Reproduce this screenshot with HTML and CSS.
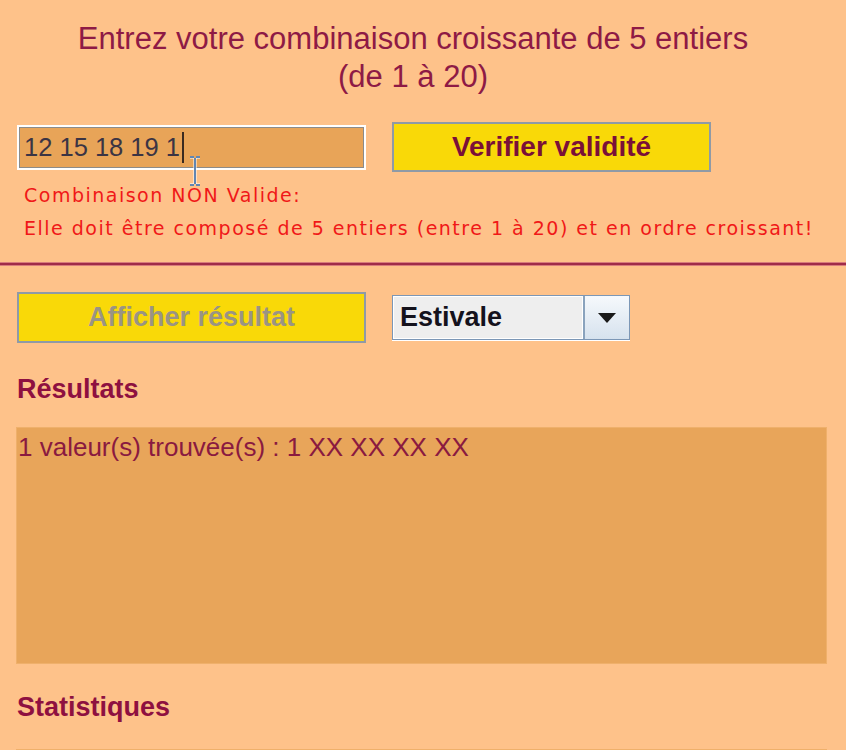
FILE: index.html
```html
<!DOCTYPE html>
<html lang="fr">
<head>
<meta charset="utf-8">
<title>Combinaison</title>
<link rel="stylesheet" href="styles.css">
</head>
<body>
<div class="page">
  <h1 class="title">Entrez votre combinaison croissante de 5 entiers<br>(de 1 à 20)</h1>

  <div class="row row-check">
    <div class="field-wrap">
      <div class="field"><span class="field-text">12 15 18 19 1</span><span class="caret"></span></div>
      <svg class="ibeam" width="12" height="30" viewBox="0 0 12 30">
        <path d="M1 1 H5 M7 1 H11 M6 2 V28 M1 29 H5 M7 29 H11" stroke="#ffffff" stroke-width="3" fill="none"/>
        <path d="M1 1 H5 M7 1 H11 M6 2 V28 M1 29 H5 M7 29 H11" stroke="#2f5f99" stroke-width="1.5" fill="none"/>
      </svg>
    </div>
    <button class="btn btn-check">Verifier validité</button>
  </div>

  <div class="error">
    <div>Combinaison NON Valide:</div>
    <div>Elle doit être composé de 5 entiers (entre 1 à 20) et en ordre croissant!</div>
  </div>
</div>

<div class="divider"></div>

<div class="page">
  <div class="row row-show">
    <button class="btn btn-show" disabled>Afficher résultat</button>
    <div class="combo">
      <span class="combo-value">Estivale</span>
      <span class="combo-arrow">
        <svg width="20" height="12" viewBox="0 0 20 12"><path d="M1 1 H19 L10 11 Z" fill="#1a1a1a"/></svg>
      </span>
    </div>
  </div>

  <h2 class="section-title">Résultats</h2>
  <div class="panel panel-results">1 valeur(s) trouvée(s) : 1 XX XX XX XX</div>

  <h2 class="section-title section-stats">Statistiques</h2>
  <div class="panel panel-stats"></div>
</div>
</body>
</html>
```

FILE: styles.css
```css
html, body {
  margin: 0;
  padding: 0;
  background: #fec28a;
  height: 100%;
  overflow: hidden;
}

body {
  font-family: "Liberation Sans", Arial, sans-serif;
}

.page {
  width: 809px;
  padding-left: 17px;
}

.title {
  margin: 0;
  padding-top: 20px;
  width: 792px;
  text-align: center;
  font-weight: normal;
  font-size: 31px;
  line-height: 38px;
  color: #8e1a45;
}

.row {
  display: flex;
  align-items: center;
  gap: 26px;
}

.row-check {
  margin-top: 26px;
}

.field-wrap {
  position: relative;
}

.field {
  height: 39px;
  box-sizing: content-box;
  background: #e8a458;
  border: 1px solid #8d8b88;
  box-shadow: 0 0 0 2px #ffffff;
  display: flex;
  align-items: center;
  padding: 0 0 0 4px;
  width: 339px;
  margin: 2px;
}

.field-text {
  font-size: 25.5px;
  color: #3b3444;
}

.caret {
  display: inline-block;
  width: 2px;
  height: 31px;
  background: #3a2a20;
  margin-left: 2px;
}

.ibeam {
  position: absolute;
  left: 172px;
  top: 31px;
}

.btn {
  font-family: "Liberation Sans", Arial, sans-serif;
  font-weight: bold;
  font-size: 27px;
  background: #f9d908;
  border: 2px solid #8f9aa6;
  padding: 0;
  margin: 0;
}

.btn-check {
  width: 319px;
  height: 50px;
  color: #7a1038;
  font-size: 28px;
}

.error {
  margin-top: 7px;
  padding-left: 7px;
  font-family: "DejaVu Sans", Verdana, sans-serif;
  font-size: 19px;
  line-height: 33px;
  color: #f01818;
  letter-spacing: 1.5px;
  white-space: nowrap;
}

.divider {
  margin-top: 18px;
  height: 2px;
  background: #a02c48;
  box-shadow: 0 -1px 0 #d87c7c, 0 1px 0 #d87c7c;
}

.row-show {
  margin-top: 27px;
}

.btn-show {
  width: 349px;
  height: 51px;
  color: #9a9484;
}

.combo {
  width: 236px;
  height: 43px;
  display: flex;
  border: 1px solid #7c97b6;
  background: #eeeeee;
  box-shadow: 0 1px 0 #ffffff;
}

.combo-value {
  flex: 1;
  display: flex;
  align-items: center;
  padding-left: 6px;
  font-weight: bold;
  font-size: 27px;
  color: #14121c;
  border: 1px solid #ffffff;
}

.combo-arrow {
  width: 44px;
  display: flex;
  align-items: center;
  justify-content: center;
  border-left: 2px solid #8aa3bd;
  background: linear-gradient(#f6f9fc, #d6e2ee);
}

.section-title {
  margin: 0;
  margin-top: 29px;
  font-size: 27px;
  line-height: 34px;
  font-weight: bold;
  color: #8e1040;
}

.panel {
  background: #e8a55a;
  width: 809px;
  box-shadow: 0 0 0 1px #efb06b;
}

.panel-results {
  margin-top: 22px;
  height: 235px;
  padding: 4px 0 0 1px;
  box-sizing: border-box;
  font-size: 26px;
  line-height: 30px;
  color: #8a1a40;
}

.section-stats {
  margin-top: 27px;
}

.panel-stats {
  margin-top: 26px;
  height: 3px;
}
```
